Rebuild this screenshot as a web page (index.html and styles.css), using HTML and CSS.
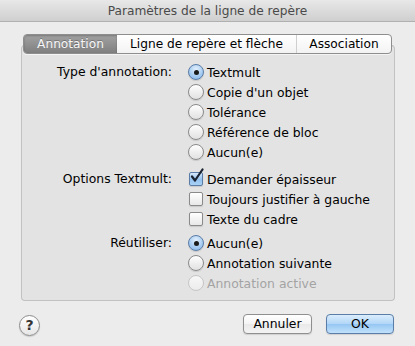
FILE: index.html
```html
<!DOCTYPE html>
<html lang="fr">
<head>
<meta charset="utf-8">
<title>Paramètres de la ligne de repère</title>
<link rel="stylesheet" href="styles.css">
</head>
<body>
<div class="window">
  <div class="titlebar">Paramètres de la ligne de repère</div>
  <div class="main">
    <div class="tabs">
      <div class="tab tab-a selected">Annotation</div>
      <div class="tab tab-b">Ligne de repère et flèche</div>
      <div class="tab tab-c">Association</div>
    </div>
    <div class="box">
      <div class="section">
        <div class="label">Type d'annotation:</div>
        <div class="options">
          <div class="opt"><span class="radio on"></span><span>Textmult</span></div>
          <div class="opt"><span class="radio"></span><span>Copie d'un objet</span></div>
          <div class="opt"><span class="radio"></span><span>Tolérance</span></div>
          <div class="opt"><span class="radio"></span><span>Référence de bloc</span></div>
          <div class="opt"><span class="radio"></span><span>Aucun(e)</span></div>
        </div>
      </div>
      <div class="section s2">
        <div class="label">Options Textmult:</div>
        <div class="options">
          <div class="opt"><span class="check on"><svg width="17" height="17" viewBox="0 0 17 17"><path d="M4 8.5 L7 12.5 L14.5 1.5" fill="none" stroke="#1a2230" stroke-width="2.2" stroke-linecap="round" stroke-linejoin="round"/></svg></span><span>Demander épaisseur</span></div>
          <div class="opt"><span class="check"></span><span>Toujours justifier à gauche</span></div>
          <div class="opt"><span class="check"></span><span>Texte du cadre</span></div>
        </div>
      </div>
      <div class="section s3">
        <div class="label">Réutiliser:</div>
        <div class="options">
          <div class="opt"><span class="radio on"></span><span>Aucun(e)</span></div>
          <div class="opt"><span class="radio"></span><span>Annotation suivante</span></div>
          <div class="opt disabled"><span class="radio"></span><span>Annotation active</span></div>
        </div>
      </div>
    </div>
  </div>
  <div class="footer">
    <div class="help">?</div>
    <div class="spacer"></div>
    <div class="btn">Annuler</div>
    <div class="btn default">OK</div>
  </div>
</div>
</body>
</html>
```

FILE: styles.css
```css
html, body {
  margin: 0;
  padding: 0;
}
body {
  width: 415px;
  height: 346px;
  overflow: hidden;
  background: #ececec;
  font-family: "DejaVu Sans", sans-serif;
  font-size: 12.4px;
  color: #000;
}
.window {
  width: 415px;
  height: 346px;
  background: #ececec;
}
.titlebar {
  height: 21px;
  line-height: 22px;
  border-bottom: 1px solid #b0b0b0;
  background: linear-gradient(#e8e8e8, #cfcfcf);
  text-align: center;
  font-size: 12.2px;
  color: #4a4a4a;
}
.main {
  padding: 12px 20px 0 21px;
}
.tabs {
  position: relative;
  z-index: 1;
  display: flex;
  margin-left: 2px;
  width: 367px;
  height: 18px;
  border: 1px solid #8e8e8e;
  border-radius: 4px;
  background: linear-gradient(#ffffff, #f3f3f3);
  font-size: 12.2px;
  box-shadow: 0 1px 0 rgba(255,255,255,0.6);
}
.tab {
  line-height: 18px;
  text-align: center;
  color: #000;
}
.tab-a { width: 93px; }
.tab-b { width: 179px; border-right: 1px solid #cfcfcf; }
.tab-c { flex: 1; }
.tab.selected {
  background: linear-gradient(#a2a2a2, #7f7f7f);
  color: #f7f7f7;
  border-radius: 3px 0 0 3px;
  box-shadow: inset 0 1px 2px rgba(0,0,0,0.25);
  text-shadow: 0 -1px 0 rgba(0,0,0,0.25);
}
.box {
  margin-top: -9px;
  height: 238px;
  width: 372px;
  border: 1px solid #c2c2c2;
  border-top-color: #b4b4b4;
  border-radius: 4px;
  background: #e3e3e3;
  padding-top: 16px;
  box-sizing: content-box;
}
.section {
  display: grid;
  grid-template-columns: 150px auto;
  column-gap: 16px;
}
.s2 { margin-top: 7px; }
.s3 { margin-top: 4px; }
.label {
  text-align: right;
  line-height: 20px;
}
.opt {
  display: flex;
  align-items: center;
  height: 20px;
  gap: 3px;
}
.opt.disabled { color: #a3a3a3; }
.radio {
  box-sizing: border-box;
  width: 16px;
  height: 16px;
  border-radius: 50%;
  border: 1px solid #8a8a8a;
  background: linear-gradient(#ffffff, #ececec 60%, #e2e2e2);
  box-shadow: 0 1px 1px rgba(0,0,0,0.12);
  display: flex;
  align-items: center;
  justify-content: center;
}
.radio.on {
  border-color: #5a7ca6;
  background: radial-gradient(circle at 50% 30%, #e3f0fc, #a9cdf2 55%, #7fb2e6);
}
.radio.on::after {
  content: "";
  width: 5px;
  height: 5px;
  border-radius: 50%;
  background: #1a1a1a;
}
.disabled .radio {
  border-color: #c6c6c6;
  background: linear-gradient(#f7f7f7, #ececec);
  box-shadow: none;
}
.check {
  position: relative;
  box-sizing: border-box;
  width: 14px;
  height: 14px;
  margin-left: 1px;
  margin-right: 1px;
  border: 1px solid #8a8a8a;
  border-radius: 2px;
  background: linear-gradient(#ffffff, #e8e8e8);
  box-shadow: 0 1px 1px rgba(0,0,0,0.12);
}
.check.on {
  border-color: #5a7ca6;
  background: linear-gradient(#d6e9fb, #93c2ef 55%, #a9d1f5);
}
.check svg {
  position: absolute;
  left: -2px;
  top: -5px;
}
.footer {
  display: flex;
  align-items: flex-start;
  padding: 13px 21px 0 19px;
}
.spacer { flex: 1; }
.help {
  box-sizing: border-box;
  width: 21px;
  height: 21px;
  margin-top: 1px;
  border-radius: 50%;
  border: 1px solid #8c8c8c;
  background: linear-gradient(#ffffff, #e6e6e6);
  box-shadow: 0 1px 1px rgba(0,0,0,0.15);
  text-align: center;
  line-height: 19px;
  font-weight: bold;
  font-size: 14px;
  color: #333;
}
.btn {
  box-sizing: border-box;
  width: 69px;
  height: 20px;
  line-height: 18px;
  text-align: center;
  border: 1px solid #8f8f8f;
  border-radius: 4px;
  background: linear-gradient(#ffffff, #f4f4f4 50%, #e9e9e9 51%, #f3f3f3);
  box-shadow: 0 1px 1px rgba(0,0,0,0.12);
}
.btn.default {
  margin-left: 14px;
  width: 68px;
  border-color: #5b7ea9;
  background: linear-gradient(#dbedfc, #b1d6f8 50%, #95c6f2 51%, #c2e2fb);
}
```
